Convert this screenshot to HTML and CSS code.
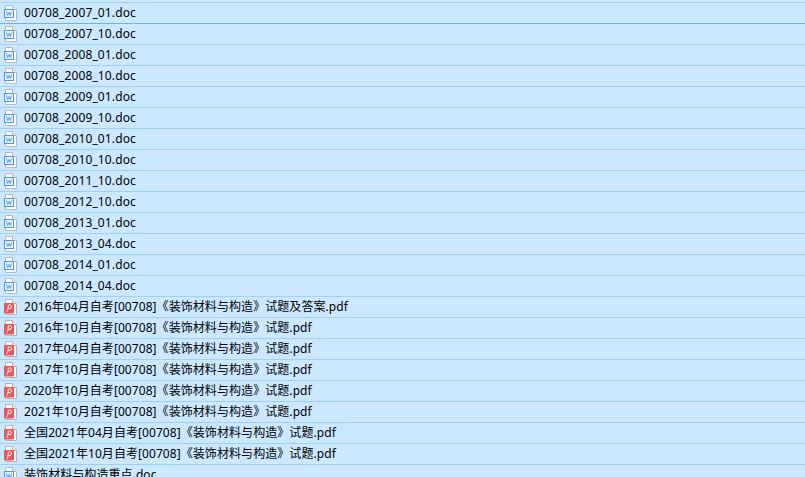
FILE: index.html
```html
<!DOCTYPE html>
<html lang="zh">
<head>
<meta charset="utf-8">
<title>Files</title>
<link rel="stylesheet" href="styles.css">
</head>
<body>
<svg class="defs" width="0" height="0" aria-hidden="true">
  <symbol id="doc" viewBox="0 0 16 16">
    <path d="M3.5 .5H10.5L14.5 4.5V15.5H3.5Z" fill="#fff" stroke="#b4b9c2"/>
    <path d="M10.5 .5V4.5H14.5" fill="#eceef2" stroke="#b4b9c2"/>
    <rect x="2.5" y="4.5" width="9" height="8" fill="#eaf3fd" stroke="#4a97ea"/>
    <path d="M4.5 6.5L5.7 10.5L7 7.5L8.3 10.5L9.5 6.5" fill="none" stroke="#4a97ea" stroke-width=".9"/>
  </symbol>
  <symbol id="pdf" viewBox="0 0 16 16">
    <path d="M3.5 .5H10.5L14.5 4.5V15.5H3.5Z" fill="#fff" stroke="#b4b4b8"/>
    <path d="M10.5 .5V4.5H14.5" fill="#eee" stroke="#b4b4b8"/>
    <rect x="2" y="4" width="10" height="10.5" rx="1" fill="#ee5558"/>
    <path d="M4.5 13C6 11 6.8 8.5 6 6.5C7.5 5.2 9.8 6 9.6 7.8C9.4 9.5 7 10 5.5 9.5" fill="none" stroke="#fff" stroke-width="1"/>
  </symbol>
</svg>
<ul class="list">
<li class="row row-doc"><svg class="icon"><use href="#doc"/></svg><span>00708_2007_01.doc</span></li>
<li class="row row-doc"><svg class="icon"><use href="#doc"/></svg><span>00708_2007_10.doc</span></li>
<li class="row row-doc"><svg class="icon"><use href="#doc"/></svg><span>00708_2008_01.doc</span></li>
<li class="row row-doc"><svg class="icon"><use href="#doc"/></svg><span>00708_2008_10.doc</span></li>
<li class="row row-doc"><svg class="icon"><use href="#doc"/></svg><span>00708_2009_01.doc</span></li>
<li class="row row-doc"><svg class="icon"><use href="#doc"/></svg><span>00708_2009_10.doc</span></li>
<li class="row row-doc"><svg class="icon"><use href="#doc"/></svg><span>00708_2010_01.doc</span></li>
<li class="row row-doc"><svg class="icon"><use href="#doc"/></svg><span>00708_2010_10.doc</span></li>
<li class="row row-doc"><svg class="icon"><use href="#doc"/></svg><span>00708_2011_10.doc</span></li>
<li class="row row-doc"><svg class="icon"><use href="#doc"/></svg><span>00708_2012_10.doc</span></li>
<li class="row row-doc"><svg class="icon"><use href="#doc"/></svg><span>00708_2013_01.doc</span></li>
<li class="row row-doc"><svg class="icon"><use href="#doc"/></svg><span>00708_2013_04.doc</span></li>
<li class="row row-doc"><svg class="icon"><use href="#doc"/></svg><span>00708_2014_01.doc</span></li>
<li class="row row-doc"><svg class="icon"><use href="#doc"/></svg><span>00708_2014_04.doc</span></li>
<li class="row row-cjk"><svg class="icon"><use href="#pdf"/></svg><span>2016年04月自考[00708]《装饰材料与构造》试题及答案.pdf</span></li>
<li class="row row-cjk"><svg class="icon"><use href="#pdf"/></svg><span>2016年10月自考[00708]《装饰材料与构造》试题.pdf</span></li>
<li class="row row-cjk"><svg class="icon"><use href="#pdf"/></svg><span>2017年04月自考[00708]《装饰材料与构造》试题.pdf</span></li>
<li class="row row-cjk"><svg class="icon"><use href="#pdf"/></svg><span>2017年10月自考[00708]《装饰材料与构造》试题.pdf</span></li>
<li class="row row-cjk"><svg class="icon"><use href="#pdf"/></svg><span>2020年10月自考[00708]《装饰材料与构造》试题.pdf</span></li>
<li class="row row-cjk"><svg class="icon"><use href="#pdf"/></svg><span>2021年10月自考[00708]《装饰材料与构造》试题.pdf</span></li>
<li class="row row-cjk"><svg class="icon"><use href="#pdf"/></svg><span>全国2021年04月自考[00708]《装饰材料与构造》试题.pdf</span></li>
<li class="row row-cjk"><svg class="icon"><use href="#pdf"/></svg><span>全国2021年10月自考[00708]《装饰材料与构造》试题.pdf</span></li>
<li class="row row-cjk"><svg class="icon"><use href="#doc"/></svg><span>装饰材料与构造重点.doc</span></li>
</ul>
</body>
</html>
```
FILE: styles.css
```css
html, body {
  margin: 0;
  padding: 0;
  height: 477px;
  overflow: hidden;
  background: #cce8ff;
}
.defs {
  position: absolute;
}
.list {
  list-style: none;
  margin: 0;
  padding: 2px 0 0;
  background: #cce8ff;
  height: 475px;
  overflow: hidden;
}
.row {
  display: flex;
  align-items: center;
  gap: 6px;
  height: 20px;
  padding-left: 2px;
  background: #cce8ff;
  border-top: 1px solid #99d1ff;
  font: 12px/20px "Noto Sans", "Noto Sans CJK SC", sans-serif;
  color: #000;
  white-space: nowrap;
}
.row:nth-child(2) {
  border-top-color: #66b5f5;
}
.row-doc {
  letter-spacing: .13px;
}
.row-cjk {
  letter-spacing: .07px;
}
.icon {
  width: 16px;
  height: 16px;
  flex: none;
  margin-top: -1px;
}
```
